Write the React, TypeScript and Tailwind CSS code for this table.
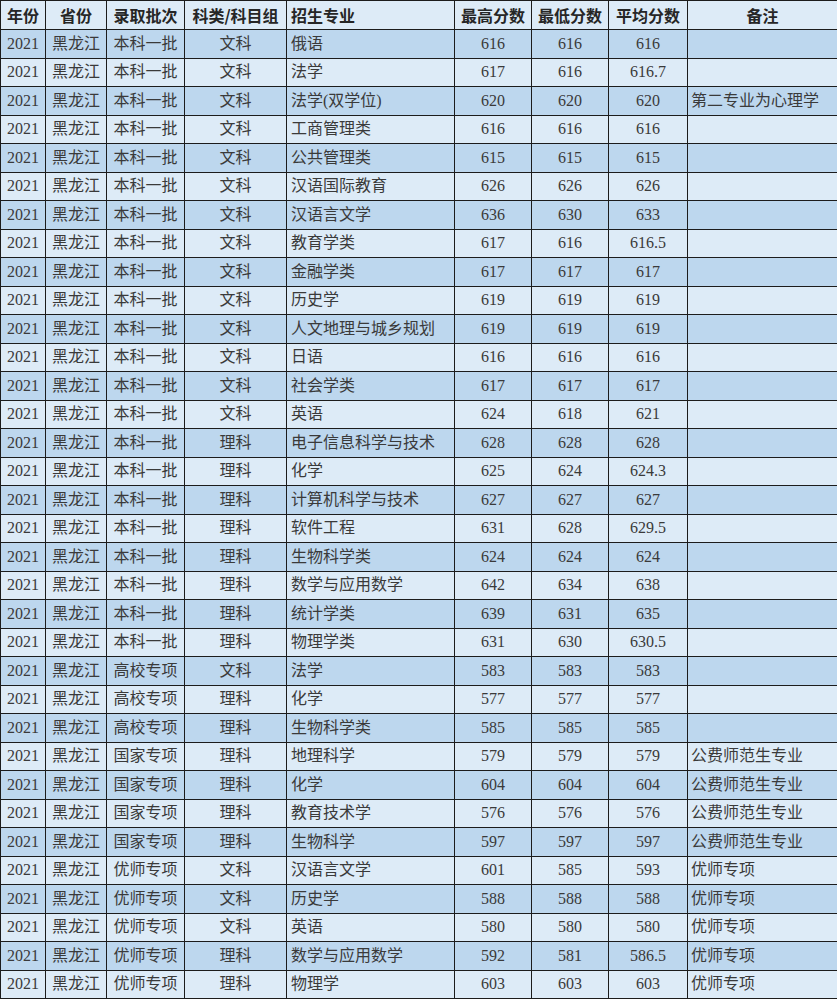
const rows: [string, string, string, string, string, string, string][] = [
  ["本科一批", "文科", "俄语", "616", "616", "616", ""],
  ["本科一批", "文科", "法学", "617", "616", "616.7", ""],
  ["本科一批", "文科", "法学(双学位)", "620", "620", "620", "第二专业为心理学"],
  ["本科一批", "文科", "工商管理类", "616", "616", "616", ""],
  ["本科一批", "文科", "公共管理类", "615", "615", "615", ""],
  ["本科一批", "文科", "汉语国际教育", "626", "626", "626", ""],
  ["本科一批", "文科", "汉语言文学", "636", "630", "633", ""],
  ["本科一批", "文科", "教育学类", "617", "616", "616.5", ""],
  ["本科一批", "文科", "金融学类", "617", "617", "617", ""],
  ["本科一批", "文科", "历史学", "619", "619", "619", ""],
  ["本科一批", "文科", "人文地理与城乡规划", "619", "619", "619", ""],
  ["本科一批", "文科", "日语", "616", "616", "616", ""],
  ["本科一批", "文科", "社会学类", "617", "617", "617", ""],
  ["本科一批", "文科", "英语", "624", "618", "621", ""],
  ["本科一批", "理科", "电子信息科学与技术", "628", "628", "628", ""],
  ["本科一批", "理科", "化学", "625", "624", "624.3", ""],
  ["本科一批", "理科", "计算机科学与技术", "627", "627", "627", ""],
  ["本科一批", "理科", "软件工程", "631", "628", "629.5", ""],
  ["本科一批", "理科", "生物科学类", "624", "624", "624", ""],
  ["本科一批", "理科", "数学与应用数学", "642", "634", "638", ""],
  ["本科一批", "理科", "统计学类", "639", "631", "635", ""],
  ["本科一批", "理科", "物理学类", "631", "630", "630.5", ""],
  ["高校专项", "文科", "法学", "583", "583", "583", ""],
  ["高校专项", "理科", "化学", "577", "577", "577", ""],
  ["高校专项", "理科", "生物科学类", "585", "585", "585", ""],
  ["国家专项", "理科", "地理科学", "579", "579", "579", "公费师范生专业"],
  ["国家专项", "理科", "化学", "604", "604", "604", "公费师范生专业"],
  ["国家专项", "理科", "教育技术学", "576", "576", "576", "公费师范生专业"],
  ["国家专项", "理科", "生物科学", "597", "597", "597", "公费师范生专业"],
  ["优师专项", "文科", "汉语言文学", "601", "585", "593", "优师专项"],
  ["优师专项", "文科", "历史学", "588", "588", "588", "优师专项"],
  ["优师专项", "文科", "英语", "580", "580", "580", "优师专项"],
  ["优师专项", "理科", "数学与应用数学", "592", "581", "586.5", "优师专项"],
  ["优师专项", "理科", "物理学", "603", "603", "603", "优师专项"],
]

const cell = "border-[1.5px] border-[#1c1c1c] p-0"
const head = "border-[1.5px] border-[#1c1c1c] p-0 font-bold text-[#262626] text-[16px]"

export default function App() {
  return (
    <div
      className="w-[837px] h-[1000px] bg-white overflow-hidden text-[#3a3a3a] text-[16px]"
      style={{ fontFamily: '"Liberation Serif", "Noto Sans CJK SC", serif' }}
    >
      <table className="w-[837px] border-collapse table-fixed leading-none">
        <colgroup>
          <col className="w-[45px]" />
          <col className="w-[61px]" />
          <col className="w-[78px]" />
          <col className="w-[102px]" />
          <col className="w-[168px]" />
          <col className="w-[77px]" />
          <col className="w-[77px]" />
          <col className="w-[79px]" />
          <col className="w-[150px]" />
        </colgroup>
        <thead>
          <tr className="h-[29px] bg-[#ddebf7]" style={{ fontFamily: '"Noto Sans CJK SC", sans-serif' }}>
            <th className={head}>年份</th>
            <th className={head}>省份</th>
            <th className={head}>录取批次</th>
            <th className={head}>科类/科目组</th>
            <th className={`${head} text-left pl-1`}>招生专业</th>
            <th className={head}>最高分数</th>
            <th className={head}>最低分数</th>
            <th className={head}>平均分数</th>
            <th className={head}>备注</th>
          </tr>
        </thead>
        <tbody>
          {rows.map((r, i) => (
            <tr key={i} className={`h-[28.5px] ${i % 2 === 0 ? "bg-[#bdd7ee]" : "bg-[#ddebf7]"}`}>
              <td className={`${cell} text-center`}>2021</td>
              <td className={`${cell} text-center`}>黑龙江</td>
              <td className={`${cell} text-center`}>{r[0]}</td>
              <td className={`${cell} text-center`}>{r[1]}</td>
              <td className={`${cell} text-left pl-1`}>{r[2]}</td>
              <td className={`${cell} text-center`}>{r[3]}</td>
              <td className={`${cell} text-center`}>{r[4]}</td>
              <td className={`${cell} text-center`}>{r[5]}</td>
              <td className={`${cell} text-left pl-[3px]`}>{r[6]}</td>
            </tr>
          ))}
        </tbody>
      </table>
    </div>
  )
}
